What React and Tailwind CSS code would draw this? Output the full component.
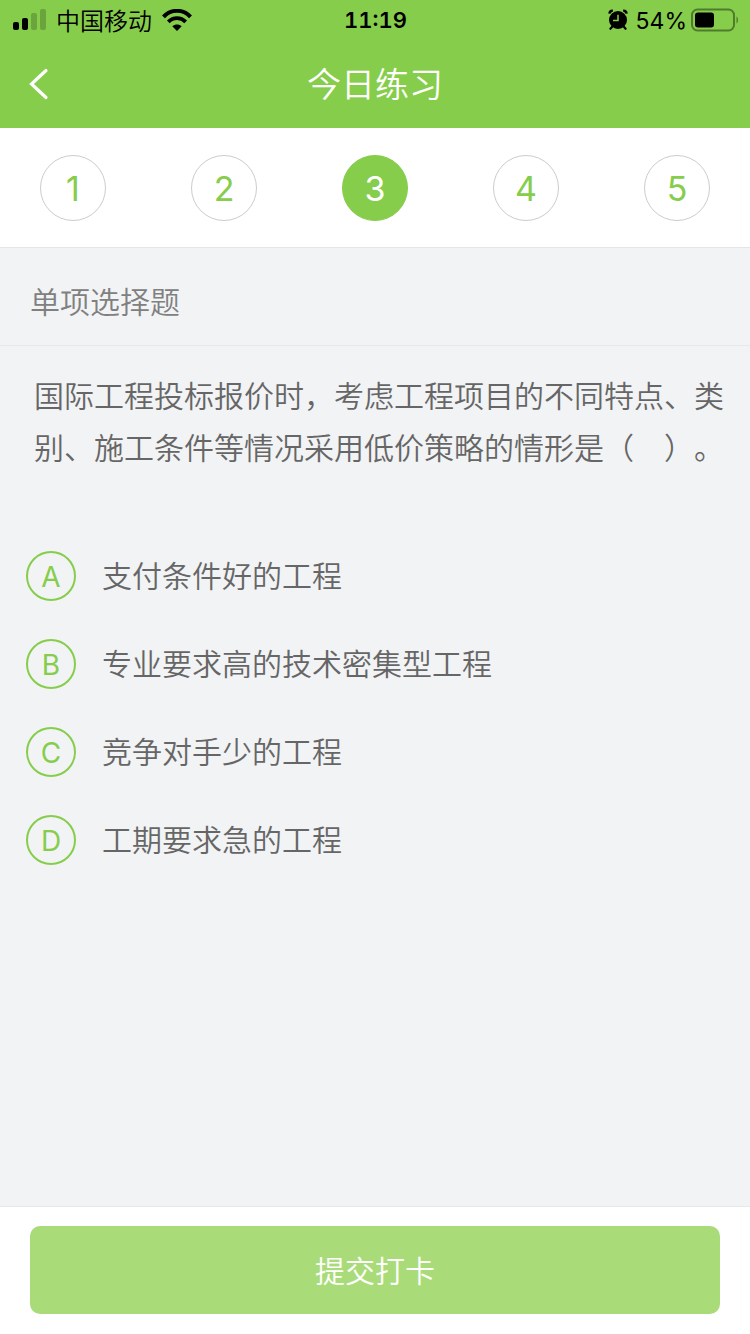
import { useState } from "react";
import clsx from "clsx";

const steps = [1, 2, 3, 4, 5];

const options = [
  { key: "A", text: "支付条件好的工程" },
  { key: "B", text: "专业要求高的技术密集型工程" },
  { key: "C", text: "竞争对手少的工程" },
  { key: "D", text: "工期要求急的工程" },
];

function SignalIcon() {
  return (
    <svg width="34" height="24" viewBox="0 0 34 24" aria-hidden="true">
      <rect x="1" y="14" width="6" height="8" rx="2" />
      <rect x="10" y="10" width="6" height="12" rx="2" />
      <rect x="19" y="5" width="6" height="17" rx="2" opacity="0.2" />
      <rect x="28" y="1" width="6" height="21" rx="2" opacity="0.2" />
    </svg>
  );
}

function WifiIcon() {
  return (
    <svg width="30" height="22" viewBox="0 0 30 22" fill="none" stroke="#000" aria-hidden="true">
      <path d="M1.5 7.8C9 -0.2 21 -0.2 28.5 7.8" strokeWidth="4" />
      <path d="M6.3 12.9C11.2 7.9 18.8 7.9 23.7 12.9" strokeWidth="3.8" />
      <path d="M15 22L10.3 17.2C13 14.8 17 14.8 19.7 17.2Z" fill="#000" stroke="none" />
    </svg>
  );
}

function AlarmIcon() {
  return (
    <svg width="20" height="22" viewBox="0 0 20 22" fill="none" aria-hidden="true">
      <circle cx="10" cy="11" r="9" fill="#000" />
      <path d="M1.4 4.6A3.2 3.2 0 0 1 4.8 1.8M15.2 1.8A3.2 3.2 0 0 1 18.6 4.6" stroke="#000" strokeWidth="2.4" />
      <path d="M4.4 17.6L2.4 19.8M15.6 17.6L17.6 19.8" stroke="#000" strokeWidth="2.2" strokeLinecap="round" />
      <path d="M10 5.8V11.6H5" stroke="#86cd4b" strokeWidth="1.5" />
    </svg>
  );
}

function BatteryIcon() {
  return (
    <svg width="48" height="24" viewBox="0 0 48 24" aria-hidden="true">
      <rect x="1" y="1.5" width="42" height="21" rx="5.5" fill="none" stroke="#000" strokeOpacity="0.4" strokeWidth="2" />
      <rect x="4" y="4.5" width="19" height="15" rx="3" />
      <path d="M45.5 8.5C47.5 9.5 47.5 14.5 45.5 15.5Z" opacity="0.4" />
    </svg>
  );
}

function StatusBar() {
  return (
    <div className="grid h-10 grid-cols-3 items-center pr-[11px] pl-3 text-2xl text-black">
      <div className="flex items-center gap-2.5">
        <SignalIcon />
        <span className="pt-1 whitespace-nowrap">中国移动</span>
        <WifiIcon />
      </div>
      <div className="pt-0.5 text-center text-[22px] font-semibold tabular-nums">11:19</div>
      <div className="flex items-center justify-end gap-1">
        <AlarmIcon />
        <span className="ml-1 pt-0.5 text-[23px] font-normal">54%</span>
        <BatteryIcon />
      </div>
    </div>
  );
}

function App() {
  const [current, setCurrent] = useState(3);
  const [answer, setAnswer] = useState(null);

  return (
    <div className="flex min-h-screen flex-col bg-[#f2f3f5] font-['Inter','Noto_Sans_CJK_SC',sans-serif] font-[350] text-[#666]">
      <header className="bg-[#86cd4b] text-white">
        <StatusBar />
        <div className="grid h-22 grid-cols-[80px_1fr_80px] items-center">
          <button type="button" aria-label="返回" className="flex h-full items-center pl-7">
            <svg width="22" height="32" viewBox="0 0 22 32" fill="none" stroke="currentColor" strokeWidth="3.2">
              <path d="M18 2.5L3.5 16L18 29.5" strokeLinecap="round" />
            </svg>
          </button>
          <h1 className="text-center text-[34px] font-[350]">今日练习</h1>
        </div>
      </header>

      <nav className="flex h-30 items-center justify-between border-b border-[#e4e5e6] bg-white px-10">
        {steps.map((step) => (
          <button
            key={step}
            type="button"
            onClick={() => setCurrent(step)}
            className={clsx(
              "size-[66px] rounded-full border pt-0.5 text-[34px] font-normal",
              step === current
                ? "border-[#86cd4b] bg-[#86cd4b] text-white"
                : "border-[#ccc] text-[#86cd4b]"
            )}
          >
            {step}
          </button>
        ))}
      </nav>

      <h2 className="flex h-[98px] items-center border-b border-[#e6e8ea] px-[30px] pt-3 text-[30px] font-[350] text-[#808080]">
        单项选择题
      </h2>

      <main className="flex-1">
        <p className="pt-6 pr-6 pl-[34px] text-[30px] leading-[52px] [text-spacing-trim:space-all]">
          国际工程投标报价时，考虑工程项目的不同特点、类别、施工条件等情况采用低价策略的情形是（　）。
        </p>

        <div className="pt-[58px]" role="radiogroup" aria-label="选项">
          {options.map((option) => (
            <label
              key={option.key}
              className="relative flex h-22 cursor-pointer items-center gap-[26px] px-[26px] text-[30px]"
            >
              <input
                type="radio"
                name="answer"
                value={option.key}
                checked={answer === option.key}
                onChange={() => setAnswer(option.key)}
                className="peer sr-only"
              />
              <span className="flex size-[50px] items-center justify-center rounded-full border-2 border-[#86cd4b] pt-0.5 text-[28px] font-normal text-[#86cd4b] peer-checked:bg-[#86cd4b] peer-checked:text-white">
                {option.key}
              </span>
              <span>{option.text}</span>
            </label>
          ))}
        </div>
      </main>

      <footer className="border-t border-[#e6e8ea] bg-white px-[30px] pt-[19px] pb-5">
        <button type="button" className="h-22 w-full rounded-[10px] bg-[#a9dc79] pt-0.5 text-[30px] text-white">
          提交打卡
        </button>
      </footer>
    </div>
  );
}

export default App;
